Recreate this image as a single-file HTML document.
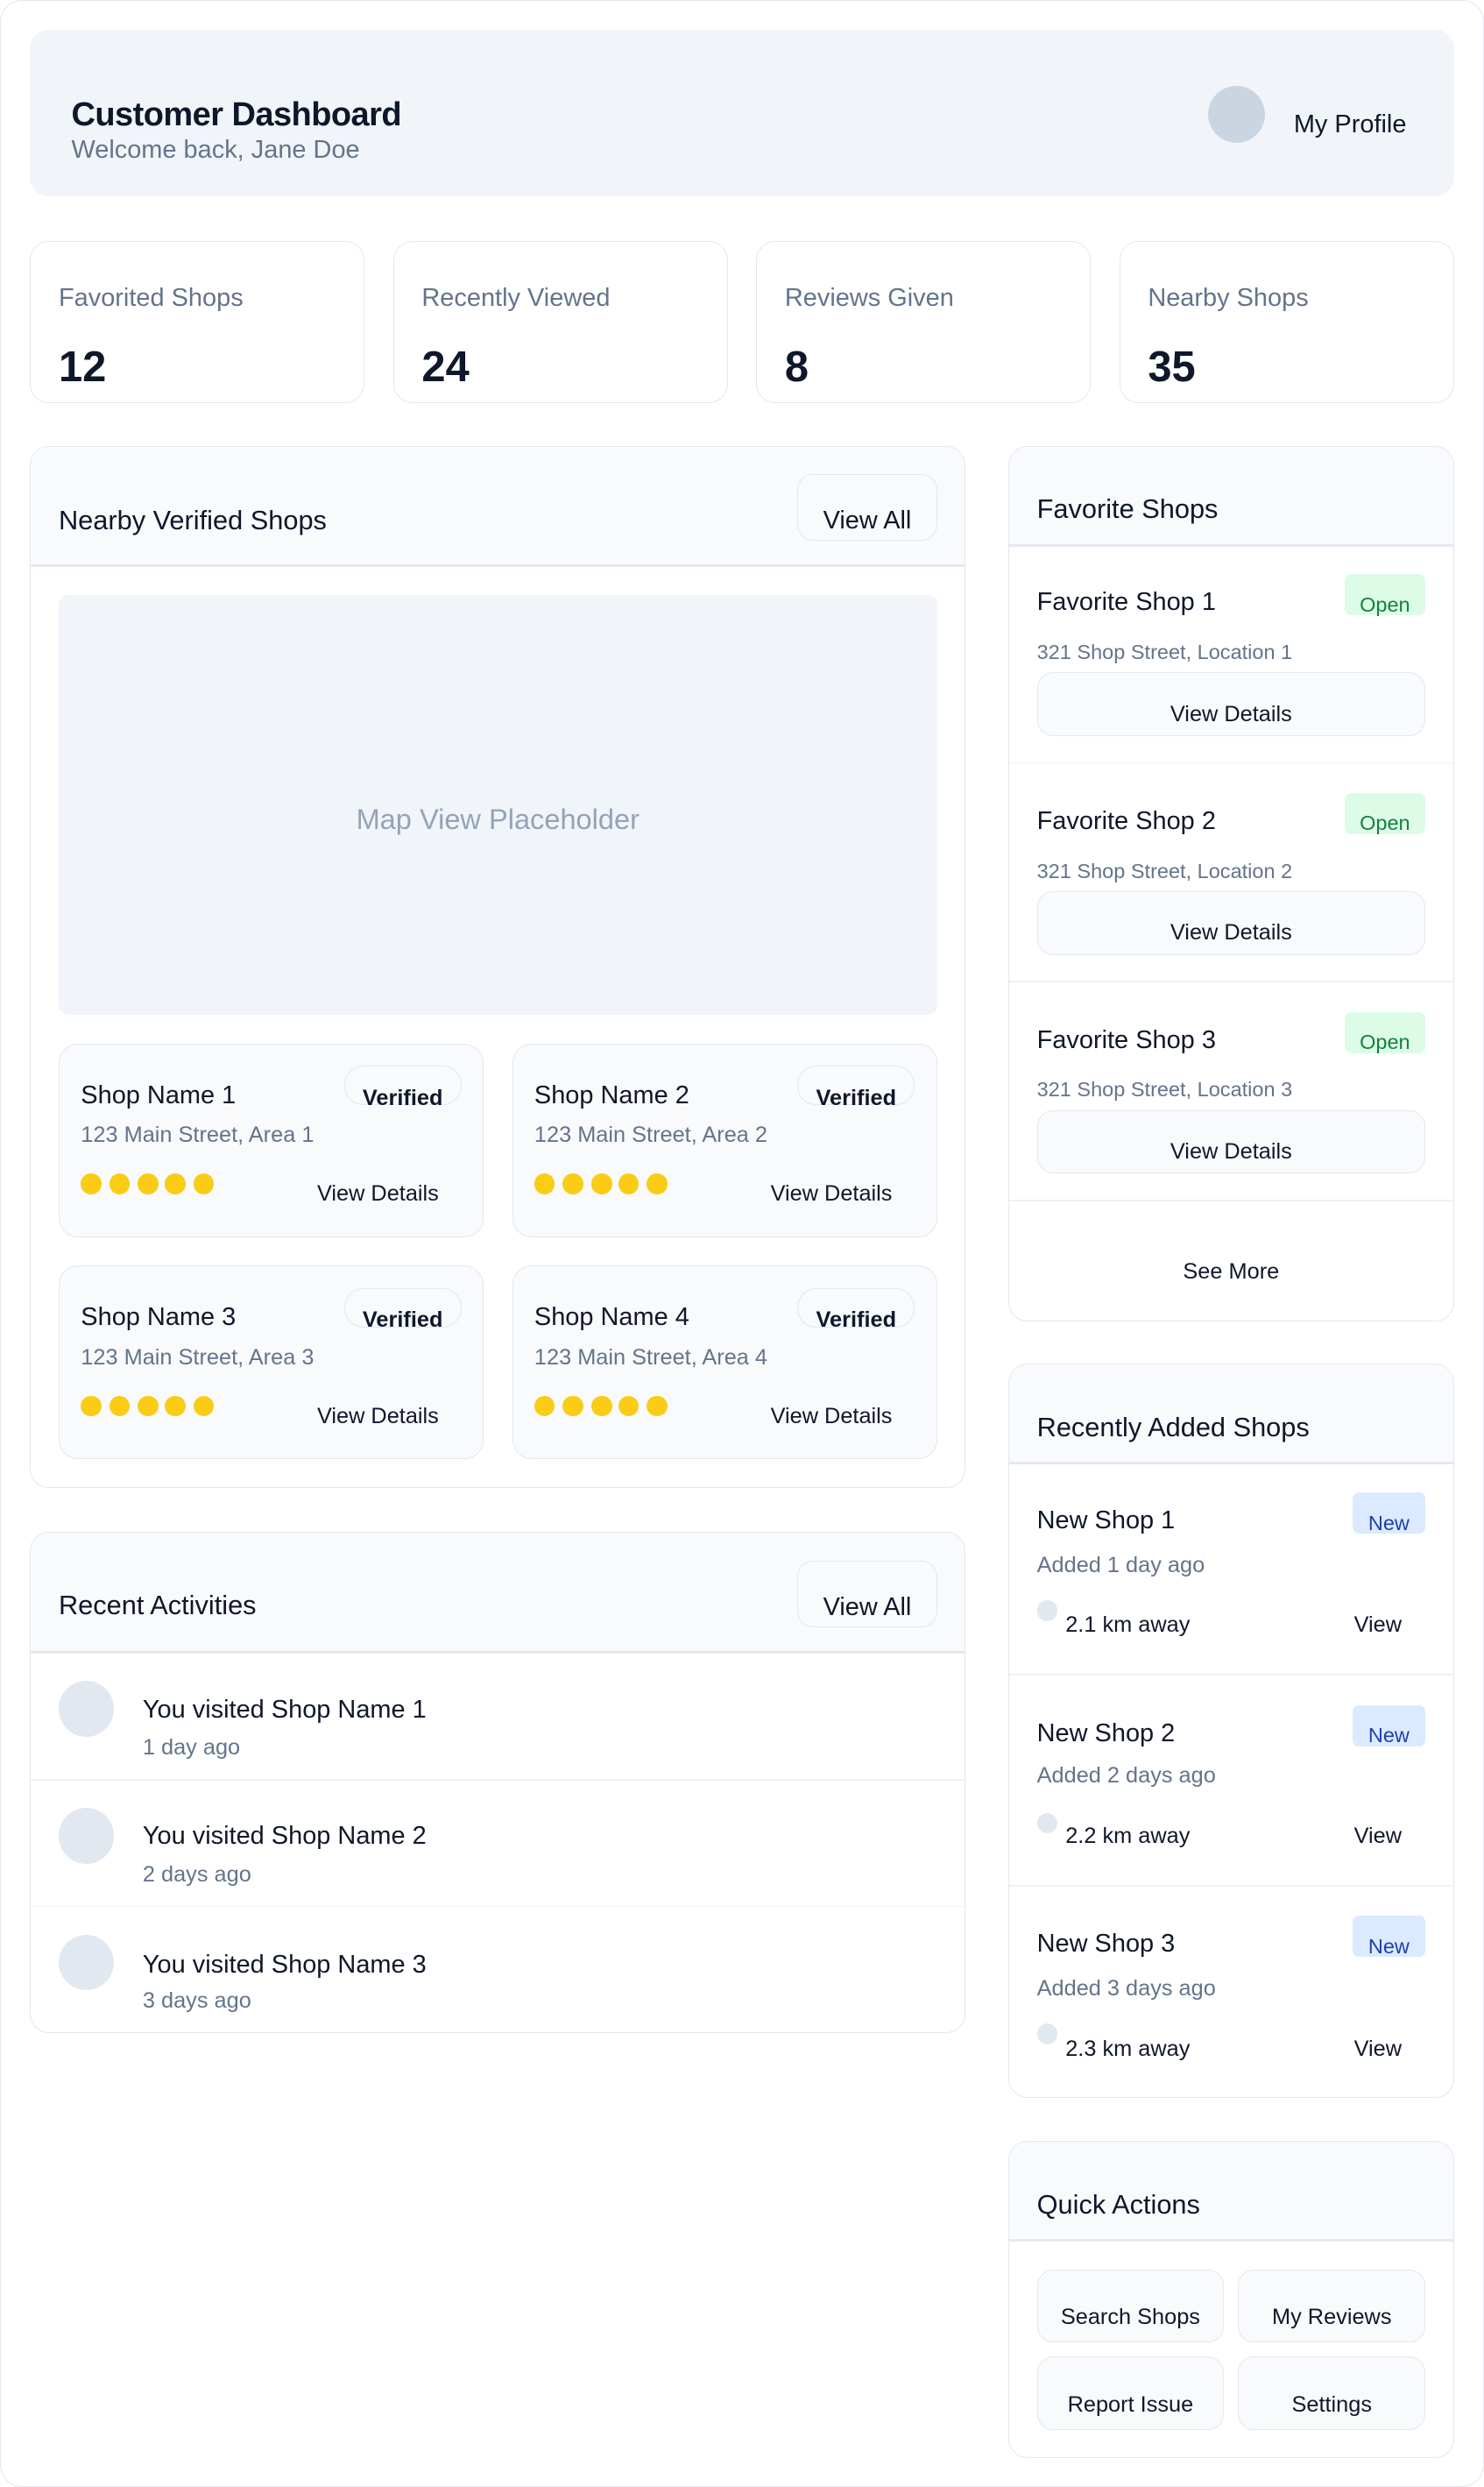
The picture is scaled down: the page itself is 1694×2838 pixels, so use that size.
<!DOCTYPE html>
<html><head><meta charset="utf-8"><style>
*{box-sizing:border-box;margin:0;padding:0}
html,body{width:1694px;height:2838px;overflow:hidden;background:#fff}
#w{zoom:1.80983;width:936px;height:1568px;position:relative;font-family:"Liberation Sans",Arial,sans-serif;color:#0f172a}
.a{position:absolute}
.bx{position:absolute;border:1px solid #e2e8f0;border-radius:12px;background:#fff}
.t{position:absolute;white-space:nowrap;line-height:1}
.g{color:#64748b}
.hd{position:absolute;left:0;right:0;top:0;background:#f8fafc;border-bottom:2px solid #e5e9f0;border-radius:12px 12px 0 0}
.btn{position:absolute;border:1px solid #e2e8f0;border-radius:10px;background:#f8fafc;font-size:14px;text-align:center}
.dot{position:absolute;width:13px;height:13px;border-radius:50%;background:#facc15}
.sep{position:absolute;left:0;right:0;height:1px;background:#eef1f5}
</style></head><body><div id="w">
<div class="a" style="left:0;top:0;width:936px;height:1568px;border:1px solid #e2e8f0;border-radius:14px"></div>
<div class="a" style="left:19px;top:19px;width:898px;height:105px;background:#f1f5f9;border-radius:12px"></div>
<div class="t" style="left:45px;top:62px;font-size:21px;font-weight:bold;letter-spacing:-0.3px">Customer Dashboard</div>
<div class="t g" style="left:45px;top:87px;font-size:16px">Welcome back, Jane Doe</div>
<div class="a" style="left:762px;top:54px;width:36px;height:36px;border-radius:50%;background:#cbd5e1"></div>
<div class="t" style="left:816px;top:71px;font-size:16px">My Profile</div>

<div class="bx" style="left:19px;top:152px;width:211px;height:102px"></div>
<div class="bx" style="left:248px;top:152px;width:211px;height:102px"></div>
<div class="bx" style="left:477px;top:152px;width:211px;height:102px"></div>
<div class="bx" style="left:706px;top:152px;width:211px;height:102px"></div>
<div class="t g" style="left:37px;top:180px;font-size:16px">Favorited Shops</div>
<div class="t g" style="left:266px;top:180px;font-size:16px">Recently Viewed</div>
<div class="t g" style="left:495px;top:180px;font-size:16px">Reviews Given</div>
<div class="t g" style="left:724px;top:180px;font-size:16px">Nearby Shops</div>
<div class="t" style="left:37px;top:218px;font-size:27px;font-weight:bold">12</div>
<div class="t" style="left:266px;top:218px;font-size:27px;font-weight:bold">24</div>
<div class="t" style="left:495px;top:218px;font-size:27px;font-weight:bold">8</div>
<div class="t" style="left:724px;top:218px;font-size:27px;font-weight:bold">35</div>

<!-- Nearby -->
<div class="bx" style="left:19px;top:281px;width:590px;height:657px"><div class="hd" style="height:76px"></div></div>
<div class="t" style="left:37px;top:320px;font-size:17px">Nearby Verified Shops</div>
<div class="btn" style="left:503px;top:299px;width:88px;height:42px;font-size:16px;padding-top:20px">View All</div>
<div class="a" style="left:37px;top:375px;width:554px;height:265px;background:#f1f5f9;border-radius:6px"></div>
<div class="t" style="left:37px;top:508px;width:554px;text-align:center;font-size:18px;color:#94a3b8">Map View Placeholder</div>

<div class="bx" style="left:37px;top:658px;width:268px;height:122px;background:#f8fafc"></div>
<div class="bx" style="left:323px;top:658px;width:268px;height:122px;background:#f8fafc"></div>
<div class="bx" style="left:37px;top:798px;width:268px;height:122px;background:#f8fafc"></div>
<div class="bx" style="left:323px;top:798px;width:268px;height:122px;background:#f8fafc"></div>

<div class="btn" style="left:217px;top:672px;width:74px;height:25px;border-radius:12px;background:transparent;font-weight:bold;padding-top:12px">Verified</div>
<div class="btn" style="left:503px;top:672px;width:74px;height:25px;border-radius:12px;background:transparent;font-weight:bold;padding-top:12px">Verified</div>
<div class="btn" style="left:217px;top:812px;width:74px;height:25px;border-radius:12px;background:transparent;font-weight:bold;padding-top:12px">Verified</div>
<div class="btn" style="left:503px;top:812px;width:74px;height:25px;border-radius:12px;background:transparent;font-weight:bold;padding-top:12px">Verified</div>

<div class="t" style="left:51px;top:683px;font-size:16px">Shop Name 1</div>
<div class="t" style="left:337px;top:683px;font-size:16px">Shop Name 2</div>
<div class="t" style="left:51px;top:823px;font-size:16px">Shop Name 3</div>
<div class="t" style="left:337px;top:823px;font-size:16px">Shop Name 4</div>
<div class="t g" style="left:51px;top:709px;font-size:14px">123 Main Street, Area 1</div>
<div class="t g" style="left:337px;top:709px;font-size:14px">123 Main Street, Area 2</div>
<div class="t g" style="left:51px;top:849px;font-size:14px">123 Main Street, Area 3</div>
<div class="t g" style="left:337px;top:849px;font-size:14px">123 Main Street, Area 4</div>
<div class="t" style="left:200px;top:746px;font-size:14px">View Details</div>
<div class="t" style="left:486px;top:746px;font-size:14px">View Details</div>
<div class="t" style="left:200px;top:886px;font-size:14px">View Details</div>
<div class="t" style="left:486px;top:886px;font-size:14px">View Details</div>

<div class="dot" style="left:51px;top:740px"></div><div class="dot" style="left:69px;top:740px"></div><div class="dot" style="left:87px;top:740px"></div><div class="dot" style="left:104px;top:740px"></div><div class="dot" style="left:122px;top:740px"></div>
<div class="dot" style="left:337px;top:740px"></div><div class="dot" style="left:355px;top:740px"></div><div class="dot" style="left:373px;top:740px"></div><div class="dot" style="left:390px;top:740px"></div><div class="dot" style="left:408px;top:740px"></div>
<div class="dot" style="left:51px;top:880px"></div><div class="dot" style="left:69px;top:880px"></div><div class="dot" style="left:87px;top:880px"></div><div class="dot" style="left:104px;top:880px"></div><div class="dot" style="left:122px;top:880px"></div>
<div class="dot" style="left:337px;top:880px"></div><div class="dot" style="left:355px;top:880px"></div><div class="dot" style="left:373px;top:880px"></div><div class="dot" style="left:390px;top:880px"></div><div class="dot" style="left:408px;top:880px"></div>

<!-- Recent activities -->
<div class="bx" style="left:19px;top:966px;width:590px;height:316px"><div class="hd" style="height:76px"></div>
<div class="sep" style="top:155px"></div><div class="sep" style="top:235px"></div></div>
<div class="t" style="left:37px;top:1004px;font-size:17px">Recent Activities</div>
<div class="btn" style="left:503px;top:984px;width:88px;height:42px;font-size:16px;padding-top:20px">View All</div>
<div class="a" style="left:37px;top:1060px;width:35px;height:35px;border-radius:50%;background:#e2e8f0"></div>
<div class="a" style="left:37px;top:1140px;width:35px;height:35px;border-radius:50%;background:#e2e8f0"></div>
<div class="a" style="left:37px;top:1220px;width:35px;height:35px;border-radius:50%;background:#e2e8f0"></div>
<div class="t" style="left:90px;top:1070px;font-size:16px">You visited Shop Name 1</div>
<div class="t g" style="left:90px;top:1095px;font-size:14px">1 day ago</div>
<div class="t" style="left:90px;top:1150px;font-size:16px">You visited Shop Name 2</div>
<div class="t g" style="left:90px;top:1175px;font-size:14px">2 days ago</div>
<div class="t" style="left:90px;top:1231px;font-size:16px">You visited Shop Name 3</div>
<div class="t g" style="left:90px;top:1255px;font-size:14px">3 days ago</div>

<!-- Favorite shops -->
<div class="bx" style="left:636px;top:281px;width:281px;height:552px"><div class="hd" style="height:63px"></div>
<div class="sep" style="top:199px"></div><div class="sep" style="top:337px"></div><div class="sep" style="top:475px"></div></div>
<div class="t" style="left:654px;top:313px;font-size:17px">Favorite Shops</div>
<div class="t" style="left:654px;top:372px;font-size:16px">Favorite Shop 1</div>
<div class="t" style="left:654px;top:510px;font-size:16px">Favorite Shop 2</div>
<div class="t" style="left:654px;top:648px;font-size:16px">Favorite Shop 3</div>
<div class="t g" style="left:654px;top:405px;font-size:13px">321 Shop Street, Location 1</div>
<div class="t g" style="left:654px;top:543px;font-size:13px">321 Shop Street, Location 2</div>
<div class="t g" style="left:654px;top:681px;font-size:13px">321 Shop Street, Location 3</div>
<div class="a" style="left:848px;top:362px;width:51px;height:26px;background:#dcfce7;border-radius:4px;color:#15803d;font-size:13px;text-align:center;padding-top:13px;line-height:1">Open</div>
<div class="a" style="left:848px;top:500px;width:51px;height:26px;background:#dcfce7;border-radius:4px;color:#15803d;font-size:13px;text-align:center;padding-top:13px;line-height:1">Open</div>
<div class="a" style="left:848px;top:638px;width:51px;height:26px;background:#dcfce7;border-radius:4px;color:#15803d;font-size:13px;text-align:center;padding-top:13px;line-height:1">Open</div>
<div class="btn" style="left:654px;top:424px;width:245px;height:40px;padding-top:19px;line-height:1">View Details</div>
<div class="btn" style="left:654px;top:562px;width:245px;height:40px;padding-top:19px;line-height:1">View Details</div>
<div class="btn" style="left:654px;top:700px;width:245px;height:40px;padding-top:19px;line-height:1">View Details</div>
<div class="t" style="left:636px;top:795px;width:281px;text-align:center;font-size:14px">See More</div>

<!-- Recently added -->
<div class="bx" style="left:636px;top:860px;width:281px;height:463px"><div class="hd" style="height:63px"></div>
<div class="sep" style="top:195px"></div><div class="sep" style="top:328px"></div></div>
<div class="t" style="left:654px;top:892px;font-size:17px">Recently Added Shops</div>
<div class="t" style="left:654px;top:951px;font-size:16px">New Shop 1</div>
<div class="t" style="left:654px;top:1085px;font-size:16px">New Shop 2</div>
<div class="t" style="left:654px;top:1218px;font-size:16px">New Shop 3</div>
<div class="t g" style="left:654px;top:980px;font-size:14px">Added 1 day ago</div>
<div class="t g" style="left:654px;top:1113px;font-size:14px">Added 2 days ago</div>
<div class="t g" style="left:654px;top:1247px;font-size:14px">Added 3 days ago</div>
<div class="a" style="left:853px;top:941px;width:46px;height:26px;background:#dbeafe;border-radius:4px;color:#1e40af;font-size:13px;text-align:center;padding-top:13px;line-height:1">New</div>
<div class="a" style="left:853px;top:1075px;width:46px;height:26px;background:#dbeafe;border-radius:4px;color:#1e40af;font-size:13px;text-align:center;padding-top:13px;line-height:1">New</div>
<div class="a" style="left:853px;top:1208px;width:46px;height:26px;background:#dbeafe;border-radius:4px;color:#1e40af;font-size:13px;text-align:center;padding-top:13px;line-height:1">New</div>
<div class="a" style="left:654px;top:1009px;width:13px;height:13px;border-radius:50%;background:#e2e8f0"></div>
<div class="a" style="left:654px;top:1143px;width:13px;height:13px;border-radius:50%;background:#e2e8f0"></div>
<div class="a" style="left:654px;top:1276px;width:13px;height:13px;border-radius:50%;background:#e2e8f0"></div>
<div class="t" style="left:672px;top:1018px;font-size:14px">2.1 km away</div>
<div class="t" style="left:672px;top:1151px;font-size:14px">2.2 km away</div>
<div class="t" style="left:672px;top:1285px;font-size:14px">2.3 km away</div>
<div class="t" style="left:854px;top:1018px;font-size:14px">View</div>
<div class="t" style="left:854px;top:1151px;font-size:14px">View</div>
<div class="t" style="left:854px;top:1285px;font-size:14px">View</div>

<!-- Quick actions -->
<div class="bx" style="left:636px;top:1350px;width:281px;height:200px"><div class="hd" style="height:63px"></div></div>
<div class="t" style="left:654px;top:1382px;font-size:17px">Quick Actions</div>
<div class="btn" style="left:654px;top:1431px;width:118px;height:46px;padding-top:23px;line-height:1">Search Shops</div>
<div class="btn" style="left:781px;top:1431px;width:118px;height:46px;padding-top:23px;line-height:1">My Reviews</div>
<div class="btn" style="left:654px;top:1486px;width:118px;height:46px;padding-top:23px;line-height:1">Report Issue</div>
<div class="btn" style="left:781px;top:1486px;width:118px;height:46px;padding-top:23px;line-height:1">Settings</div>
</div></body></html>
